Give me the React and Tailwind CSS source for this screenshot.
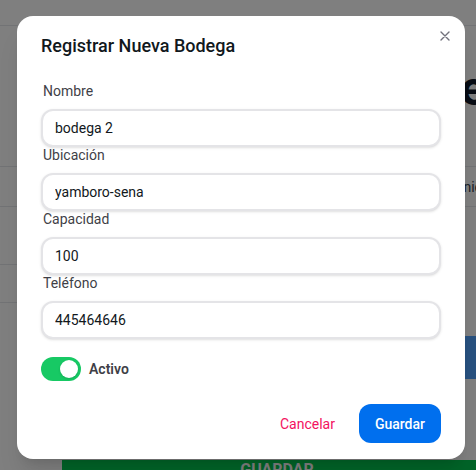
import React from "react"

const fields = [
  { label: "Nombre", value: "bodega 2" },
  { label: "Ubicación", value: "yamboro-sena" },
  { label: "Capacidad", value: "100" },
  { label: "Teléfono", value: "445464646" },
]

const Field = ({ label, value }) => (
  <div className="flex flex-col">
    <label className="mb-2.5 ml-0.5 block text-sm leading-4 text-zinc-700">{label}</label>
    <input
      readOnly
      value={value}
      className="h-[38px] w-full rounded-xl border-2 border-zinc-200 bg-white px-3 text-sm text-[#11181c] shadow-sm outline-none"
    />
  </div>
)

export default function App() {
  return (
    <div className="relative h-[470px] w-[476px] overflow-hidden bg-white font-['Segoe_UI',Roboto,sans-serif]">
      {/* page behind the modal */}
      <div className="h-[26px] border-b border-gray-200" />
      <div className="flex h-[140px] items-start justify-end pt-[39px]">
        <h1 className="-mr-[10px] whitespace-nowrap text-5xl leading-none font-bold text-gray-900">Bodegas de Sede</h1>
      </div>
      <div className="flex h-[41px] items-center justify-end border-y border-gray-200 text-sm text-gray-700">
        <span className="-mr-[6px] whitespace-nowrap">nie</span>
      </div>
      <div className="h-[58px] w-[300px] border-b border-gray-200" />
      <div className="h-[38px] w-[300px] border-b border-gray-200" />
      <div className="mt-[33px] flex justify-end">
        <div className="-mr-[60px] h-[43px] w-[120px] rounded-lg bg-blue-400" />
      </div>
      <div className="ml-[62px] mt-[81px] flex h-[44px] w-[430px] justify-center bg-green-500 text-base leading-5 font-bold text-white">
        GUARDAR
      </div>

      {/* overlay + modal */}
      <div className="absolute inset-0 bg-black/50" />
      <div className="absolute left-[17px] top-[16px] flex w-[448px] flex-col rounded-2xl bg-white shadow-xl">
        <button className="absolute left-[423px] top-[15px] text-zinc-500">
          <svg width="10" height="10" viewBox="0 0 10 10" fill="none" stroke="currentColor" strokeWidth="1.4" strokeLinecap="round">
            <path d="M1 1l8 8M9 1L1 9" />
          </svg>
        </button>
        <h2 className="px-6 pt-4 text-lg leading-7 font-medium text-[#11181c]">Registrar Nueva Bodega</h2>
        <div className="flex flex-col px-6 pt-[23px]">
          {fields.map(f => <Field key={f.label} {...f} />)}
          <div className="mt-[18px] flex items-center">
            <div className="flex h-6 w-10 items-center justify-end rounded-full bg-[#17c964]">
              <div className="mr-[3px] h-[18px] w-[18px] rounded-full bg-white shadow-sm" />
            </div>
            <span className="ml-2 text-sm font-semibold text-zinc-700">Activo</span>
          </div>
        </div>
        <div className="flex justify-end gap-2 px-6 pt-[23px] pb-4">
          <button className="h-[39px] rounded-xl px-4 text-sm text-[#f31260]">Cancelar</button>
          <button className="h-[39px] rounded-xl bg-[#006fee] px-4 text-sm font-medium text-white">Guardar</button>
        </div>
      </div>
    </div>
  )
}
